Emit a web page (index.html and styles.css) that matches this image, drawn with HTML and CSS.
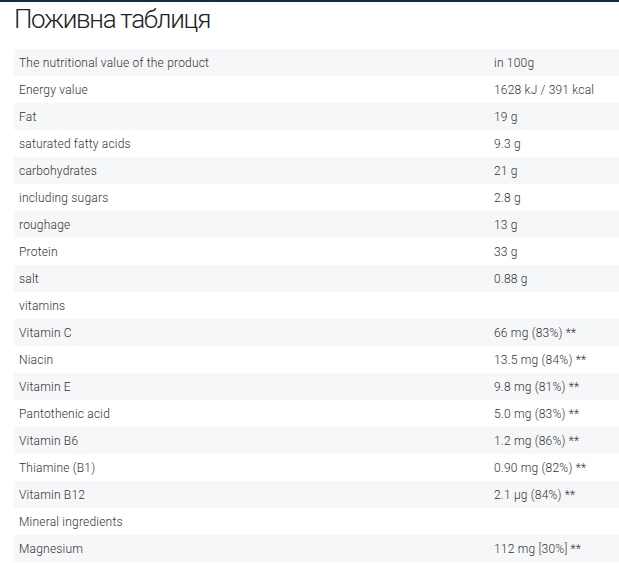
FILE: index.html
```html
<!DOCTYPE html>
<html>
<head>
<meta charset="utf-8">
<link rel="stylesheet" href="styles.css">
</head>
<body>
<div class="page">
  <h2 class="title">Поживна таблиця</h2>
  <table class="nutri">
    <tbody>
      <tr><td>The nutritional value of the product</td><td>in 100g</td></tr>
      <tr><td>Energy value</td><td>1628 kJ / 391 kcal</td></tr>
      <tr><td>Fat</td><td>19 g</td></tr>
      <tr><td>saturated fatty acids</td><td>9.3 g</td></tr>
      <tr><td>carbohydrates</td><td>21 g</td></tr>
      <tr><td>including sugars</td><td>2.8 g</td></tr>
      <tr><td>roughage</td><td>13 g</td></tr>
      <tr><td>Protein</td><td>33 g</td></tr>
      <tr><td>salt</td><td>0.88 g</td></tr>
      <tr><td>vitamins</td><td></td></tr>
      <tr><td>Vitamin C</td><td>66 mg (83%) **</td></tr>
      <tr><td>Niacin</td><td>13.5 mg (84%) **</td></tr>
      <tr><td>Vitamin E</td><td>9.8 mg (81%) **</td></tr>
      <tr><td>Pantothenic acid</td><td>5.0 mg (83%) **</td></tr>
      <tr><td>Vitamin B6</td><td>1.2 mg (86%) **</td></tr>
      <tr><td>Thiamine (B1)</td><td>0.90 mg (82%) **</td></tr>
      <tr><td>Vitamin B12</td><td>2.1 µg (84%) **</td></tr>
      <tr><td>Mineral ingredients</td><td></td></tr>
      <tr><td>Magnesium</td><td>112 mg [30%] **</td></tr>
    </tbody>
  </table>
</div>
</body>
</html>
```
FILE: styles.css
```css
html, body {
  margin: 0;
  padding: 0;
  background: #fff;
}
body {
  font-family: Roboto, "Liberation Sans", sans-serif;
  color: #333;
  border-top: 2px solid #0e2f4a;
  overflow: hidden;
}
.page {
  padding-left: 14px;
}
.title {
  margin: 0;
  padding-top: 1px;
  height: 46px;
  font-size: 26px;
  font-weight: 300;
  letter-spacing: -1.3px;
  color: #222;
  line-height: 32px;
}
.nutri {
  border-collapse: collapse;
  width: 620px;
  font-size: 12px;
  font-weight: 300;
  letter-spacing: 0.2px;
}
.nutri td {
  height: 27px;
  padding: 0 5px;
  vertical-align: middle;
}
.nutri td:first-child {
  width: 465px;
}
.nutri tr:nth-child(odd) {
  background: #f6f7f9;
}
```
